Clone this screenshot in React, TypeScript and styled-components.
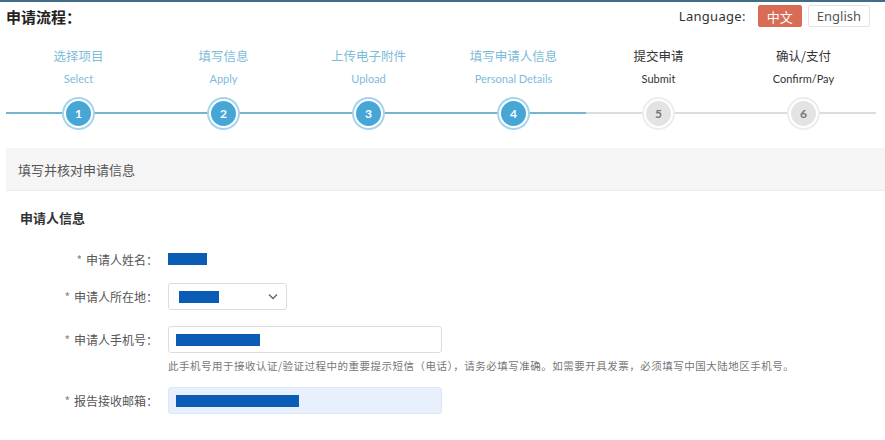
import * as React from 'react'
import styled, { createGlobalStyle, css } from 'styled-components'

const GlobalStyle = createGlobalStyle`
  html, body {
    margin: 0;
    padding: 0;
    background: #fff;
    font-family: "Noto Sans", "Noto Sans CJK SC", sans-serif;
    color: #333;
  }
`

const Page = styled.div`
  width: 885px;
  height: 440px;
  overflow: hidden;
  border-top: 2px solid #3f6f86;
  box-sizing: border-box;
`

const TopBar = styled.div`
  display: flex;
  align-items: center;
  justify-content: space-between;
  height: 28px;
  padding: 0 15px 0 6px;
`

const Title = styled.h1`
  margin: 0;
  font-size: 15px;
  font-weight: 700;
  color: #222;
  font-family: "Noto Sans CJK SC", sans-serif;
`

const LangBox = styled.div`
  display: flex;
  align-items: center;
  gap: 6px;
  font-size: 13px;
  color: #333;
`

const LangLabel = styled.span`
  margin-right: 6px;
  letter-spacing: 0.3px;
`

const LangButton = styled.button<{ $active?: boolean }>`
  height: 22px;
  padding: 0 8px;
  font-size: 13px;
  border-radius: 2px;
  font-family: "Noto Sans", "Noto Sans CJK SC", sans-serif;
  ${p =>
    p.$active
      ? css`
          background: #d86c55;
          color: #fff;
          border: 1px solid #d86c55;
        `
      : css`
          background: #fff;
          color: #555;
          border: 1px solid #e2e2e2;
        `}
`

const Steps = styled.div`
  display: grid;
  grid-template-columns: repeat(6, 145px);
  margin: 18px 0 0 6px;
`

const Step = styled.div<{ $done: boolean }>`
  display: flex;
  flex-direction: column;
  align-items: center;
  color: ${p => (p.$done ? '#7dbcd9' : '#333')};
`

const StepCn = styled.div`
  font-size: 12.5px;
  line-height: 16px;
  font-family: "Noto Sans CJK SC", sans-serif;
`

const StepEn = styled.div`
  font-size: 11px;
  line-height: 14px;
  margin-top: 8px;
  font-family: "Lato", "Open Sans", sans-serif;
`

const Track = styled.div<{ $done: boolean }>`
  position: relative;
  width: 100%;
  height: 34px;
  margin-top: 10px;
  display: flex;
  align-items: center;
  justify-content: center;
  &::before {
    content: '';
    position: absolute;
    left: 0;
    right: 0;
    top: 16px;
    height: 2px;
    background: ${p => (p.$done ? '#77b5cf' : '#d9dde0')};
  }
`

const Circle = styled.div<{ $done: boolean }>`
  position: relative;
  width: 25px;
  height: 25px;
  border-radius: 50%;
  display: flex;
  align-items: center;
  justify-content: center;
  font-size: 12px;
  font-weight: 700;
  font-family: "Lato", sans-serif;
  ${p =>
    p.$done
      ? css`
          background: #46a6d6;
          color: #fff;
          border: 2px solid #fff;
          box-shadow: 0 0 0 2px #a6d4ea;
        `
      : css`
          background: #e3e3e3;
          color: #777;
          border: 2px solid #fff;
          box-shadow: 0 0 0 2px #ededed;
        `}
`

const PanelHead = styled.div`
  margin: 18px 0 0 6px;
  height: 42px;
  background: #f5f5f5;
  border-bottom: 1px solid #ececec;
  display: flex;
  align-items: center;
  padding-left: 12px;
  font-size: 13px;
  color: #555;
  font-family: "Noto Sans CJK SC", sans-serif;
`

const Section = styled.h2`
  margin: 17px 0 0 20px;
  font-size: 13px;
  font-weight: 700;
  color: #333;
  font-family: "Noto Sans CJK SC", sans-serif;
`

const Form = styled.div`
  margin-top: 21px;
  display: flex;
  flex-direction: column;
`

const Row = styled.div<{ $gap: number }>`
  display: grid;
  grid-template-columns: 158px 1fr;
  column-gap: 10px;
  align-items: center;
  margin-top: ${p => p.$gap}px;
`

const Label = styled.label`
  text-align: right;
  font-size: 12px;
  color: #555;
  font-family: "Noto Sans CJK SC", sans-serif;
  &::before {
    content: '*';
    color: #888;
    margin-right: 4px;
  }
`

const Masked = styled.span<{ $w: number }>`
  display: inline-block;
  height: 12px;
  width: ${p => p.$w}px;
  background: #0b5cb5;
`

const Select = styled.div`
  width: 119px;
  height: 27px;
  box-sizing: border-box;
  border: 1px solid #ddd;
  border-radius: 3px;
  display: flex;
  align-items: center;
  justify-content: space-between;
  padding: 0 8px 0 10px;
  background: #fff;
`

const Input = styled.div<{ $filled?: boolean }>`
  width: 274px;
  height: 27px;
  box-sizing: border-box;
  border: 1px solid ${p => (p.$filled ? '#dde6f5' : '#ddd')};
  border-radius: 3px;
  background: ${p => (p.$filled ? '#e8f0fe' : '#fff')};
  display: flex;
  align-items: center;
  padding-left: 7px;
`

const Help = styled.div`
  grid-column: 2;
  font-size: 10.5px;
  letter-spacing: 0.5px;
  color: #777;
  margin-top: 5px;
  font-family: "Noto Sans CJK SC", sans-serif;
`

const steps = [
  { cn: '选择项目', en: 'Select' },
  { cn: '填写信息', en: 'Apply' },
  { cn: '上传电子附件', en: 'Upload' },
  { cn: '填写申请人信息', en: 'Personal Details' },
  { cn: '提交申请', en: 'Submit' },
  { cn: '确认/支付', en: 'Confirm/Pay' },
]

const Chevron = () => (
  <svg width="10" height="7" viewBox="0 0 10 7">
    <path d="M1 1.5 L5 5.5 L9 1.5" fill="none" stroke="#666" strokeWidth="1.4" />
  </svg>
)

export default function App() {
  return (
    <Page>
      <GlobalStyle />
      <TopBar>
        <Title>申请流程：</Title>
        <LangBox>
          <LangLabel>Language:</LangLabel>
          <LangButton $active>中文</LangButton>
          <LangButton>English</LangButton>
        </LangBox>
      </TopBar>
      <Steps>
        {steps.map((s, i) => {
          const done = i < 4
          return (
            <Step key={s.en} $done={done}>
              <StepCn>{s.cn}</StepCn>
              <StepEn>{s.en}</StepEn>
              <Track $done={done}>
                <Circle $done={done}>{i + 1}</Circle>
              </Track>
            </Step>
          )
        })}
      </Steps>
      <PanelHead>填写并核对申请信息</PanelHead>
      <Section>申请人信息</Section>
      <Form>
        <Row $gap={0}>
          <Label>申请人姓名：</Label>
          <div>
            <Masked $w={39} />
          </div>
        </Row>
        <Row $gap={13}>
          <Label>申请人所在地：</Label>
          <Select>
            <Masked $w={40} />
            <Chevron />
          </Select>
        </Row>
        <Row $gap={16}>
          <Label>申请人手机号：</Label>
          <Input>
            <Masked $w={84} />
          </Input>
          <Help>此手机号用于接收认证/验证过程中的重要提示短信（电话），请务必填写准确。如需要开具发票，必须填写中国大陆地区手机号。</Help>
        </Row>
        <Row $gap={14}>
          <Label>报告接收邮箱：</Label>
          <Input $filled>
            <Masked $w={123} />
          </Input>
        </Row>
      </Form>
    </Page>
  )
}
